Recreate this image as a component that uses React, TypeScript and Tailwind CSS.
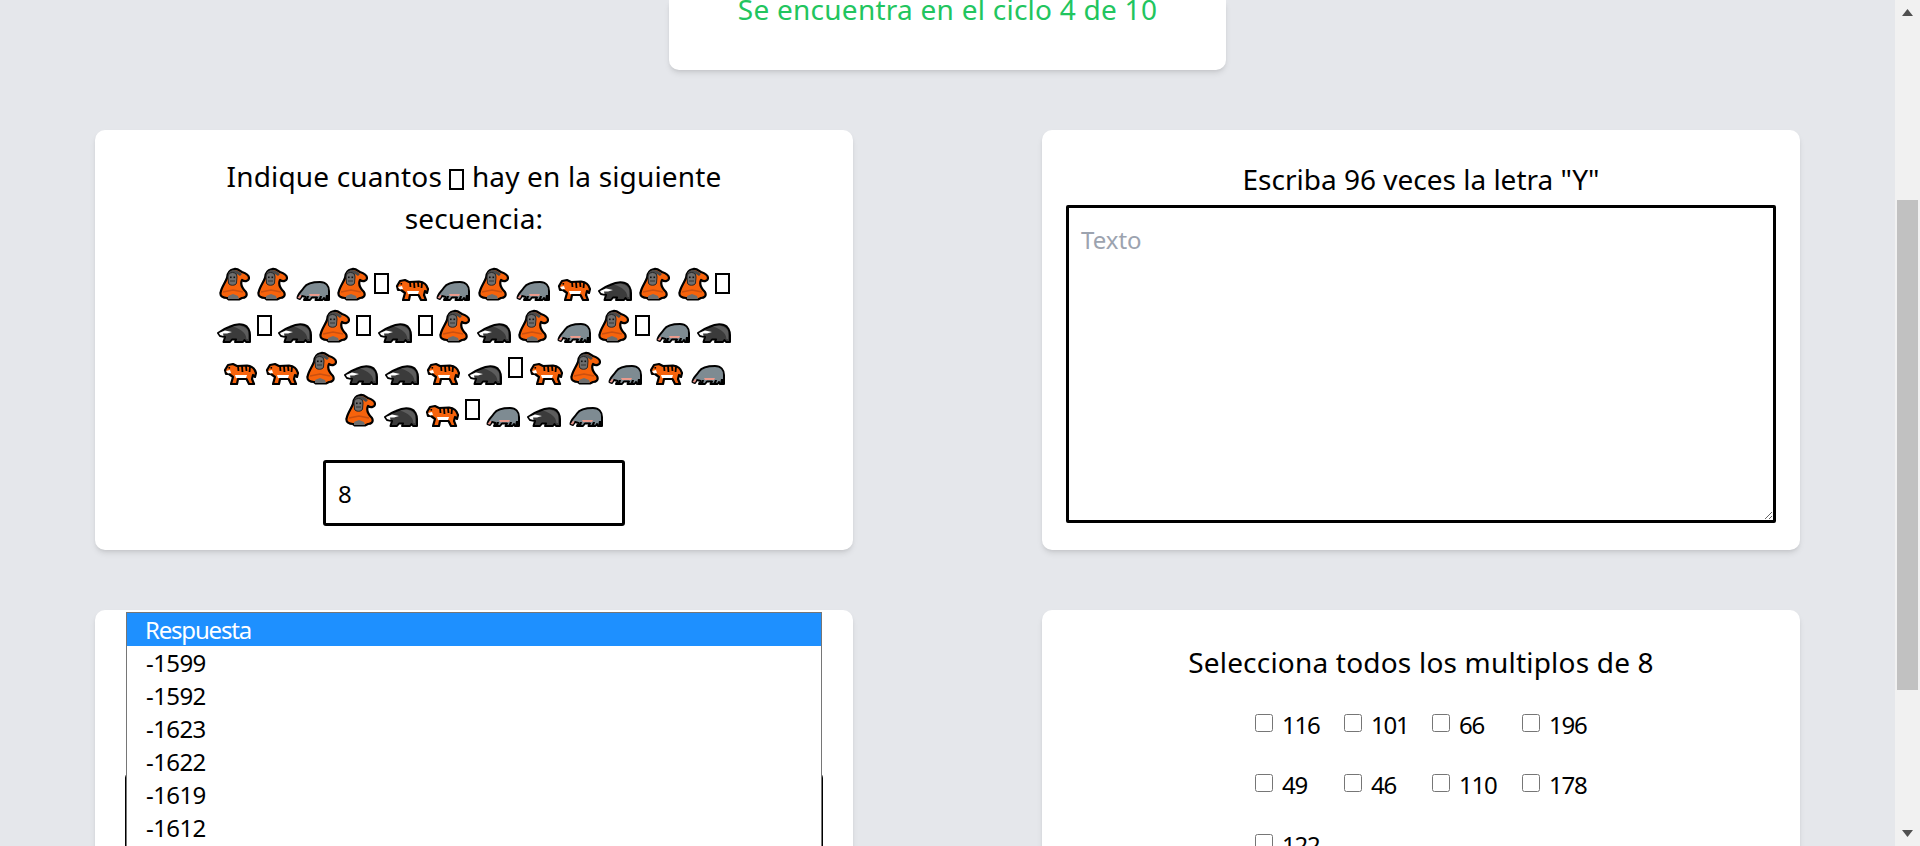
import React from "react";

const font = { fontFamily: '"Noto Sans", "Open Sans", sans-serif' };

function Orang() {
  return (
    <svg width="31" height="34" viewBox="0 0 31 34" className="shrink-0">
      <path d="M15 2C18 1 20 3 23 5C26 6 30 8 30 11C30 14 26 15 23 13C21 17 23 21 27 25C29 29 26 31 23 31L20 32.500L10 32.500L8 31C4 31 1 29 1.500 26C2 21 6 16 8 11C8 6 11 3 15 2Z" fill="#f7630c" stroke="#000" strokeWidth="2.2" strokeLinejoin="round" />
      <path d="M9 9C9 5 12 3 15 3C18 3 21 5 23 7L21 9L18 7L18 10Z" fill="#4a4a4a" />
      <path d="M9 10C9 7 11 5.500 13.500 5.500C16 5.500 18 7 18 10L17.500 16C17 19 10 19 9.500 16Z" fill="#6e6e6e" stroke="#262626" strokeWidth="1" />
      <rect x="11" y="9.500" width="1.600" height="1.600" fill="#111" />
      <rect x="14.500" y="9.500" width="1.600" height="1.600" fill="#111" />
      <path d="M11 14L16 14" stroke="#333" strokeWidth="1" />
      <path d="M4 25L14 23L24 25" fill="none" stroke="#ca5010" strokeWidth="1.500" />
      <path d="M9 29L14 27L19 29L20 32L9 32Z" fill="#6e6e6e" />
    </svg>
  );
}

function Hippo() {
  return (
    <svg width="34" height="21" viewBox="0 0 34 21" className="shrink-0">
      <path d="M1.500 18C1.500 14 5 12 8 7.500C11 3 19 2 24 2C30 2 33 6 33 11L33 20L29 20L28 18L26.500 20L19.500 20L21 17.500L16 17.500L14 20L8 20L9.500 17L6 16L4 19Z" fill="#7e8b92" stroke="#000" strokeWidth="2" strokeLinejoin="round" />
      <path d="M1.500 18L4 15L5.500 15.500L4 18.500Z" fill="#e8958a" />
      <path d="M13 14L24 14L23 16L14 16Z" fill="#eb9a8c" />
      <path d="M9 20L11 16L13 16L12 20ZM22 20L24 16L26 16L25 20ZM29 20L30 15L32 15L32 20Z" fill="#000" />
    </svg>
  );
}

function Tiger() {
  return (
    <svg width="34" height="24" viewBox="0 0 34 24" className="shrink-0">
      <path d="M2 9L5 4L10 3L14 5L24 4.500C29 5 32 8 33 12L32 16L30 14L29 18L31 23L26 23L23.500 18L15 18L14 23L8 23L10 16L6 13L3 13Z" fill="#f7630c" stroke="#000" strokeWidth="2.200" strokeLinejoin="round" />
      <path d="M12 14L24 14L23 17L13 17Z" fill="#fff" />
      <path d="M3 10L7 9L8 12L5 12.500Z" fill="#fff" />
      <path d="M15 5L15.500 10M19 5L19.500 11M23 5L23.500 10M27 6L26.500 11" stroke="#000" strokeWidth="1.800" fill="none" />
      <rect x="5.500" y="6" width="1.600" height="1.600" fill="#000" />
    </svg>
  );
}

function Badger() {
  return (
    <svg width="34" height="21" viewBox="0 0 34 21" className="shrink-0">
      <path d="M1 11C5 8 9 6 12 5C18 2 24 2 27 3C31 4 33 9 33 13L33 20L29 20L27.500 18L26 20L18 20L19 17.500L15 17.500L13 20L6.500 20L8 15L3 14Z" fill="#3b3b3b" stroke="#000" strokeWidth="2" strokeLinejoin="round" />
      <path d="M2 11L8 8.500L15 10L10 11.500L6 11.500L6.500 14L3 13Z" fill="#fff" />
      <path d="M16 4.500C22 3 28 3.500 31 9L31 17L29.500 17C29 11 24 7 16 4.500Z" fill="#5c5c5c" />
    </svg>
  );
}

function Tofu() {
  return <span className="inline-block w-[15px] h-[21px] border-2 border-black shrink-0 mb-[7px] -mx-px" />;
}

type T = "o" | "h" | "t" | "b" | "x";

const rows: T[][] = [
  ["o", "o", "h", "o", "x", "t", "h", "o", "h", "t", "b", "o", "o", "x"],
  ["b", "x", "b", "o", "x", "b", "x", "o", "b", "o", "h", "o", "x", "h", "b"],
  ["t", "t", "o", "b", "b", "t", "b", "x", "t", "o", "h", "t", "h"],
  ["o", "b", "t", "x", "h", "b", "h"],
];

function Token({ t }: { t: T }) {
  if (t === "o") return <Orang />;
  if (t === "h") return <Hippo />;
  if (t === "t") return <Tiger />;
  if (t === "b") return <Badger />;
  return <Tofu />;
}

const multiples = ["116", "101", "66", "196", "49", "46", "110", "178", "122"];
const options = ["-1599", "-1592", "-1623", "-1622", "-1619", "-1612", "-1601"];

const card = "bg-white rounded-[10px] shadow-md";

export default function App() {
  return (
    <div className="flex h-[846px] overflow-hidden bg-[#e5e7eb] text-black" style={font}>
      <div className="flex-1 min-w-0">
        <div className={`${card} w-[557px] h-[70px] mx-auto text-center text-[28px] leading-[42px] text-[#22c55e] rounded-t-none`}>
          <p className="-translate-y-[12px] tracking-[0.25px]">Se encuentra en el ciclo 4 de 10</p>
        </div>

        <div className="grid grid-cols-[758px_758px] justify-between px-[95px] mt-[60px] gap-y-[60px]">
          <div className={`${card} h-[420px] pt-[25px] flex flex-col items-center`}>
            <p className="w-[520px] text-center text-[28px] leading-[42px] tracking-[0.16px]">
              Indique cuantos <span className="inline-block align-[-3px] w-[15px] h-[21px] border-2 border-black" /> hay en la siguiente secuencia:
            </p>
            <div className="mt-[28px] flex flex-col gap-2 items-center">
              {rows.map((r, i) => (
                <div key={i} className="flex h-[34px] items-end justify-center gap-[7.2px]">
                  {r.map((t, j) => (
                    <Token key={j} t={t} />
                  ))}
                </div>
              ))}
            </div>
            <input
              readOnly
              value="8"
              className="mt-[33px] w-[302px] h-[66px] border-[3px] border-black rounded-[3px] px-3 text-2xl outline-none"
            />
          </div>

          <div className={`${card} h-[420px] px-6 pt-[28px]`}>
            <p className="text-center text-[28px] leading-[42px]">Escriba 96 veces la letra "Y"</p>
            <textarea
              placeholder="Texto"
              className="block mt-[5px] w-[710px] h-[318px] border-[3px] border-black rounded-[2px] px-3 py-4 text-2xl outline-none placeholder:text-[#9ca3af]"
            />
          </div>

          <div className={`${card} relative h-[300px] pt-[162px] px-[30px]`}>
            <div className="h-[90px] border-[3px] border-black rounded-md" />
            <ul className="absolute left-[31px] top-[2px] w-[696px] bg-white border border-[#767676] text-2xl leading-[33px] tracking-[-0.6px]">
              <li className="bg-[#1e90ff] text-white pl-[18px] pr-[19px] tracking-[-1.2px]">Respuesta</li>
              {options.map((o) => (
                <li key={o} className="px-[19px]">{o}</li>
              ))}
            </ul>
          </div>

          <div className={`${card} h-[300px] pt-[31px]`}>
            <p className="text-center text-[28px] leading-[42px] tracking-[0.2px]">Selecciona todos los multiplos de 8</p>
            <div className="ml-[213px] mt-[24px] grid grid-cols-[89px_88px_90px_89px] gap-y-[24px] text-2xl leading-9">
              {multiples.map((m) => (
                <label key={m} className="flex items-center gap-[9px] tracking-[-1.2px]">
                  <input type="checkbox" className="w-[18px] h-[18px] -mt-1 shrink-0" />
                  {m}
                </label>
              ))}
            </div>
          </div>
        </div>
      </div>

      <div className="w-[25px] h-full bg-[#f1f1f1] flex flex-col items-center shrink-0">
        <svg width="11" height="7" viewBox="0 0 11 7" className="mt-[9px] shrink-0"><path d="M5.500 0L11 7L0 7Z" fill="#505050" /></svg>
        <div className="mt-[184px] w-[21px] h-[490px] bg-[#c1c1c1] shrink-0" />
        <svg width="11" height="7" viewBox="0 0 11 7" className="mt-[140px] shrink-0"><path d="M0 0L11 0L5.500 7Z" fill="#505050" /></svg>
      </div>
    </div>
  );
}
